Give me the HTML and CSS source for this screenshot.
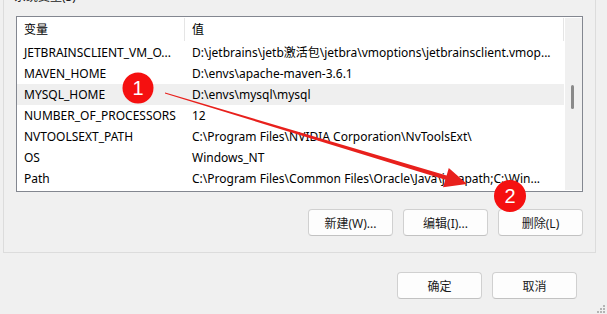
FILE: index.html
```html
<!DOCTYPE html>
<html lang="zh-CN">
<head>
  <meta charset="UTF-8" />
  <title>环境变量</title>
  <link rel="stylesheet" href="styles.css">
</head>
<body>
  <div class="page">
    <div class="groupbox">
      <div class="group-label">系统变量(S)</div>

      <div class="listview">
        <div class="lv-table">
          <div class="lv-row lv-head">
            <div class="cell">变量</div>
            <div class="cell">值</div>
          </div>
          <div class="lv-row">
            <div class="cell">JETBRAINSCLIENT_VM_O...</div>
            <div class="cell">D:\jetbrains\jetb激活包\jetbra\vmoptions\jetbrainsclient.vmop...</div>
          </div>
          <div class="lv-row">
            <div class="cell">MAVEN_HOME</div>
            <div class="cell">D:\envs\apache-maven-3.6.1</div>
          </div>
          <div class="lv-row selected">
            <div class="cell">MYSQL_HOME</div>
            <div class="cell">D:\envs\mysql\mysql</div>
          </div>
          <div class="lv-row">
            <div class="cell">NUMBER_OF_PROCESSORS</div>
            <div class="cell">12</div>
          </div>
          <div class="lv-row">
            <div class="cell">NVTOOLSEXT_PATH</div>
            <div class="cell">C:\Program Files\NVIDIA Corporation\NvToolsExt\</div>
          </div>
          <div class="lv-row">
            <div class="cell">OS</div>
            <div class="cell">Windows_NT</div>
          </div>
          <div class="lv-row">
            <div class="cell">Path</div>
            <div class="cell">C:\Program Files\Common Files\Oracle\Java\javapath;C:\Win...</div>
          </div>
        </div>
        <div class="scrollbar">
          <div class="thumb"></div>
        </div>
      </div>

      <div class="btn-row">
        <button class="btn">新建(W)...</button>
        <button class="btn">编辑(I)...</button>
        <button class="btn">删除(L)</button>
      </div>
    </div>

    <div class="dialog-buttons">
      <button class="btn">确定</button>
      <button class="btn">取消</button>
    </div>
  </div>

  <!-- annotations drawn over the dialog -->
  <svg class="annot" width="607" height="314" viewBox="0 0 607 314">
    <polygon fill="#e8201c"
      points="165.1,92.5 446.6,175.6 448.8,168.1 467,184 443,187.3 445.4,179.8 164.9,93.5" />
    <circle cx="138" cy="88" r="15.5" fill="#f51010" />
    <text x="138" y="95" class="annot-num">1</text>
    <circle cx="510" cy="196" r="16" fill="#f51010" />
    <text x="510" y="203" class="annot-num">2</text>
  </svg>

  <svg class="grip" width="10" height="10" viewBox="0 0 10 10">
    <rect x="7" y="1" width="2" height="2" />
    <rect x="4" y="4" width="2" height="2" />
    <rect x="7" y="4" width="2" height="2" />
    <rect x="1" y="7" width="2" height="2" />
    <rect x="4" y="7" width="2" height="2" />
    <rect x="7" y="7" width="2" height="2" />
  </svg>
</body>
</html>
```

FILE: styles.css
```css
* {
  box-sizing: border-box;
}

html, body {
  margin: 0;
  width: 607px;
  height: 314px;
  overflow: hidden;
  background: #f0f0f0;
}

body {
  position: relative;
  font-family: "Noto Sans", "Noto Sans CJK SC", sans-serif;
  font-size: 12px;
  color: #000;
}

.page {
  padding-left: 3px;
}

.groupbox {
  position: relative;
  width: 593px;
  margin-top: -5px;
  padding: 20px 12px 16px 12px;
  border: 1px solid #dcdcdc;
}

.group-label {
  position: absolute;
  top: -8px;
  left: 8px;
  padding: 0 2px;
  line-height: 18px;
  background: #f0f0f0;
  color: #1a1a1a;
}

.listview {
  display: flex;
  width: 567px;
  height: 176px;
  border: 1px solid #838790;
  background: #fff;
  overflow: hidden;
}

.lv-table {
  width: 548px;
}

.lv-row {
  display: grid;
  grid-template-columns: 168px 1fr;
  height: 21px;
  line-height: 21px;
}

.lv-row .cell {
  padding: 0 2px 0 7px;
  white-space: nowrap;
  overflow: hidden;
}

.lv-head {
  height: 25px;
  line-height: 25px;
}

.lv-head .cell {
  border-right: 1px solid #e5e5e5;
  margin: 1px 0;
  line-height: 23px;
}

.lv-row.selected {
  background: #efefef;
}

.scrollbar {
  position: relative;
  width: 17px;
  background: #f0f0f0;
  margin: 1px 0 1px 1px;
}

.thumb {
  position: absolute;
  left: 6px;
  top: 67px;
  width: 3px;
  height: 24px;
  border-radius: 2px;
  background: #8a8a8a;
}

.btn-row {
  display: flex;
  justify-content: flex-end;
  gap: 10px;
  width: 567px;
  margin-top: 17px;
}

.btn {
  width: 85px;
  height: 27px;
  padding: 0;
  border: 1px solid #d0d0d0;
  border-bottom-color: #c2c2c2;
  border-radius: 4px;
  background: #fdfdfd;
  font-family: "Noto Sans", "Noto Sans CJK SC", sans-serif;
  font-size: 12px;
  color: #1a1a1a;
}

.dialog-buttons {
  display: flex;
  justify-content: flex-end;
  gap: 10px;
  padding-right: 30px;
  margin-top: 19px;
}

.annot {
  position: absolute;
  top: 0;
  left: 0;
  pointer-events: none;
}

.annot-num {
  font-family: "Liberation Sans", Arial, sans-serif;
  font-size: 20px;
  fill: #fff;
  text-anchor: middle;
}

.grip {
  position: absolute;
  right: 1px;
  bottom: 0;
  fill: #b4b4b4;
}
```
